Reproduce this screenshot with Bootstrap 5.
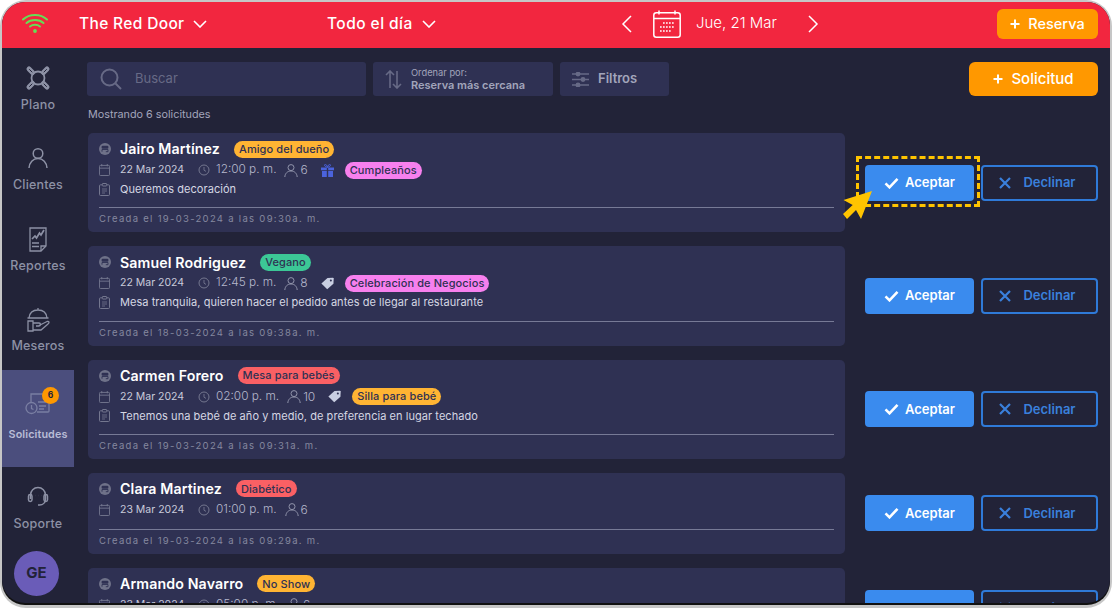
<!DOCTYPE html>
<html lang="es">
<head>
<meta charset="UTF-8">
<meta name="viewport" content="width=device-width, initial-scale=1.0">
<title>Solicitudes - The Red Door</title>
<link href="https://cdn.jsdelivr.net/npm/bootstrap@5.3.3/dist/css/bootstrap.min.css" rel="stylesheet">
<style>
html, body { height: 100%; }
body { background: #fff; font-family: Inter, "Open Sans", sans-serif; overflow: hidden; }
.outer-frame { width: 1112px; height: 608px; background: #c6c6c6; padding: 2px; border-radius: 26px; }
.app-frame { height: 601px; background: #222338; border-radius: 23px; overflow: hidden; box-shadow: 0 2px 0 #111; }
.top-bar { height: 46px; background: #f2263f; color: #fff; padding: 0 12px 3px 0; }
.venue { margin-left: 77px; width: 248px; font-size: 15.5px; font-weight: 500; letter-spacing: .35px; gap: 9px; }
.shift { width: 294px; font-size: 15.5px; font-weight: 500; letter-spacing: .45px; gap: 9px; }
.date-nav { font-size: 15px; font-weight: 300; width: 370px; }
.date-label { width: 82px; margin: 0 30px 0 15px; white-space: nowrap; }
.cal-big { margin: 0 0 0 21px; }
.btn-reserva, .btn-solicitud { background: #ff9800; color: #fff; border: 0; font-weight: 500; display: flex; align-items: center; justify-content: center; gap: 8px; }
.btn-reserva:hover, .btn-solicitud:hover { background: #ff9800; color: #fff; }
.btn-reserva { width: 101px; height: 30px; border-radius: 6px; font-size: 14.5px; }
.btn-solicitud { width: 129px; height: 34px; border-radius: 6px; font-size: 15px; }
.side-rail { width: 72px; flex: none; }
.rail-item { height: 80.5px; padding-top: 15.5px; color: #8d91a5; font-size: 12.5px; letter-spacing: .2px; font-weight: 500; }
.rail-item svg { height: 28px; }
.rail-item span { margin-top: 5px; line-height: 16px; }
.rail-active { height: 97px; background: #4b4e7d; color: #b9bcd6; padding-top: 19px; font-size: 10.8px; letter-spacing: .1px; font-weight: 600; }
.rail-active span { margin-top: 10px; }
.req-count { top: 17px; left: 40px; width: 17px; height: 17px; background: #ff9800; color: #222338; font-size: 8.5px; font-weight: 700; }
.avatar-ge { width: 45px; height: 45px; background: #6a5cb8; color: #222338; font-size: 15px; font-weight: 700; margin: 3px 0 0 12px; }
.main-pane { padding: 14px 12px 0 13px; }
.tool-box { height: 34px; background: #2f3153; border-radius: 3px; color: #a2a5bb; }
.tool-search { width: 279px; padding-left: 13px; font-size: 13px; color: #676a86; gap: 13px; }
.tool-order { width: 180px; padding-left: 12px; gap: 9px; }
.tool-filter { width: 109px; padding-left: 12px; gap: 9px; font-size: 13px; font-weight: 600; }
.tool-gap { gap: 7px; }
.order-small { font-size: 9.3px; line-height: 11px; }
.order-big { font-size: 11px; line-height: 14px; font-weight: 600; white-space: nowrap; }
.count-line { font-size: 10.8px; line-height: 16px; color: #a2a5bb; margin: 11px 0 10px 1px; }
.req-row { margin: 0 0 14px 1px; gap: 20px; }
.req-card { background: #2f3153; border-radius: 5px; padding: 7px 11px 0 11px; }
.line-name, .line-meta, .line-note { display: flex; align-items: center; }
.line-name { height: 18px; gap: 9px; }
.guest { font-size: 14.2px; font-weight: 600; letter-spacing: .12px; color: #fff; margin-right: 5px; white-space: nowrap; }
.line-meta { height: 20px; margin-top: 2px; font-size: 10.5px; color: #c9cbdb; gap: 10px; }
.line-note { height: 18.33px; font-size: 11px; letter-spacing: .05px; color: #d5d7e3; gap: 10px; }
.meta-time { font-size: 11.8px; color: #b6b8cc; font-weight: 300; margin-left: -4px; margin-right: -2px; white-space: nowrap; }
.date-txt { width: 63px; white-space: nowrap; margin-right: 5px; }
.meta-num { font-size: 12px; color: #b6b8cc; font-weight: 300; margin-left: -8px; margin-right: 3px; }
.req-pill { border-radius: 9px; height: 17px; padding: 0 5px; font-size: 11px; letter-spacing: .1px; font-weight: 500; color: #2f3153; display: inline-flex; align-items: center; white-space: nowrap; }
.line-meta .req-pill { margin-left: 1px; }
.pill-amber { background: #ffb433; }
.pill-pink { background: #f780ee; }
.pill-green { background: #3cc796; }
.pill-red { background: #fa6064; }
.req-rule { border-top: 1px solid #777a96; margin-top: 9px; }
.req-stamp { font-size: 9.5px; letter-spacing: 1.3px; color: #85889f; line-height: 20px; padding: 1px 0 3px; white-space: nowrap; }
.req-actions { width: 233px; gap: 7px; }
.btn-aceptar, .btn-declinar { height: 36px; border-radius: 4px; font-size: 13px; font-weight: 600; display: flex; align-items: center; justify-content: center; }
.btn-aceptar { width: 109px; background: #3a8bee; border: 0; color: #fff; gap: 6px; }
.btn-declinar { width: 117px; background: transparent; border: 2px solid #2f7ad8; color: #3a80dc; gap: 12px; padding: 0 4px 0 0; }
.btn-aceptar:hover { background: #3a8bee; color: #fff; }
.btn-declinar:hover { background: transparent; color: #3a80dc; border-color: #2f7ad8; }
.focus-dash { top: -9px; left: -9px; right: -6px; bottom: -6px; border: 3px dashed #ffc400; pointer-events: none; }
.focus-arrow { left: -22px; top: 26px; }
</style>
</head>
<body>
<svg width="0" height="0" class="position-absolute">
  <defs>
    <symbol id="i-round" viewBox="0 0 12 12"><circle cx="6" cy="6" r="6" fill="#6f7289"/><rect x="2.600" y="2.800" width="6.800" height="3" rx="1" fill="#2f3153"/><path d="M3 6.500h6v2.200H6.800M3 6.500v2.200" stroke="#2f3153" stroke-width=".9" fill="none"/></symbol>
    <symbol id="i-cal" viewBox="0 0 12 13"><rect x=".5" y="1.500" width="11" height="11" rx="1" fill="none" stroke="#74778f"/><path d="M.5 4.500h11M3 0v2.500M9 0v2.500" stroke="#74778f" fill="none"/></symbol>
    <symbol id="i-clock" viewBox="0 0 12 12"><circle cx="6" cy="6" r="5" fill="none" stroke="#74778f"/><path d="M6 3v3.200l2 1.200" fill="none" stroke="#74778f" stroke-width=".9"/></symbol>
    <symbol id="i-user" viewBox="0 0 14 13"><circle cx="7" cy="3.600" r="3" fill="none" stroke="#9194ab"/><path d="M.8 13c.3-3.600 2.600-6 6.200-6s5.900 2.400 6.200 6" fill="none" stroke="#9194ab"/></symbol>
    <symbol id="i-note" viewBox="0 0 11 13"><rect x=".5" y="1.800" width="10" height="10.700" rx="1" fill="none" stroke="#74778f"/><rect x="3.300" y=".5" width="4.400" height="2.500" rx=".6" fill="#2f3153" stroke="#74778f"/><path d="M3 6h5M3 8h5M3 10h3" stroke="#74778f" stroke-width=".8"/></symbol>
    <symbol id="i-gift" viewBox="0 0 13 13"><path d="M0 3.500h5.800v2.800H0zM7.200 3.500H13v2.800H7.200zM1 7h4.800v6H1zM7.200 7H12v6H7.200z" fill="#4b63dc"/><path d="M6.500 3.300C5 3 3.200 2.300 3.600.8 4.500-.3 6 1 6.500 3.300 7 1 8.500-.3 9.400.8c.4 1.500-1.400 2.200-2.900 2.500z" fill="none" stroke="#4b63dc"/></symbol>
    <symbol id="i-tag" viewBox="0 0 14 13"><path d="M7 .6 12.800.3c.5 0 .9.400.9.900l-.3 5.500-6.700 6-6.300-6.100z" fill="#c9cfe2"/><circle cx="10.600" cy="3.300" r="1.100" fill="#2f3153"/></symbol>
    <symbol id="i-check" viewBox="0 0 15 12"><path d="M1.500 6.300 5.500 10.300 13.500 1.800" fill="none" stroke="#fff" stroke-width="2.600"/></symbol>
    <symbol id="i-x" viewBox="0 0 12 12"><path d="M1 1 11 11M11 1 1 11" fill="none" stroke="#3a80dc" stroke-width="2.200"/></symbol>
    <symbol id="i-chev" viewBox="0 0 14 8"><path d="M1 1 7 7 13 1" fill="none" stroke="#fff" stroke-width="1.600"/></symbol>
    <symbol id="i-plus" viewBox="0 0 10 10"><path d="M5 .5v9M.5 5h9" fill="none" stroke="#fff" stroke-width="2"/></symbol>
  </defs>
</svg>

<div class="outer-frame">
<div class="app-frame d-flex flex-column position-relative">
  <header class="top-bar d-flex align-items-center flex-shrink-0">
    <svg class="position-absolute" style="left:20px;top:11px" width="26" height="20" viewBox="0 0 26 20" fill="none" stroke="#66dd55" stroke-width="2" stroke-linecap="round"><path d="M1 6.500C7.500.5 18.500.5 25 6.500"/><path d="M4.500 10c4.500-4 12.500-4 17 0"/><path d="M8 13.500c2.800-2.300 7.200-2.300 10 0"/><circle cx="13" cy="18" r=".9" fill="#66dd55"/></svg>
    <div class="venue d-flex align-items-center"><span>The Red Door</span><svg width="14" height="8"><use href="#i-chev"/></svg></div>
    <div class="shift d-flex align-items-center"><span>Todo el día</span><svg width="14" height="8"><use href="#i-chev"/></svg></div>
    <div class="date-nav d-flex align-items-center">
      <svg width="11" height="18" viewBox="0 0 11 18" fill="none" stroke="#fff" stroke-width="1.500"><path d="M10 1 2 9l8 8"/></svg>
      <svg class="cal-big" width="28" height="28" viewBox="0 0 28 28" fill="none" stroke="#fff" stroke-width="1.500"><rect x=".8" y="2.800" width="26.400" height="24.400" rx="2.500"/><path d="M1 8.500h26M6 .5v4M22 .5v4"/><path d="M10 13h12M7 17h15M7 21h11" stroke-width="1.700" stroke-dasharray="1.700 1.300"/></svg>
      <span class="date-label">Jue, 21 Mar</span>
      <svg width="11" height="18" viewBox="0 0 11 18" fill="none" stroke="#fff" stroke-width="1.500"><path d="m1 1 8 8-8 8"/></svg>
    </div>
    <button class="btn btn-reserva p-0 ms-auto"><svg width="10" height="10"><use href="#i-plus"/></svg>Reserva</button>
  </header>

  <div class="d-flex flex-grow-1 overflow-hidden">
    <nav class="side-rail d-flex flex-column">
      <div class="rail-item d-flex flex-column align-items-center">
        <svg width="28" viewBox="0 0 28 28" fill="none" stroke="#8d91a5" stroke-width="1.800"><circle cx="14" cy="14" r="6.500"/><path d="m5 5 3.500 3.500M23 5l-3.500 3.500M5 23l3.500-3.500M23 23l-3.500-3.500" stroke-width="5" stroke-linecap="round"/><path d="m5.500 5.500 2.500 2.500M22.500 5.500 20 8M5.500 22.500 8 20M22.500 22.500 20 20" stroke="#222338" stroke-width="1" stroke-linecap="round"/></svg>
        <span>Plano</span>
      </div>
      <div class="rail-item d-flex flex-column align-items-center">
        <svg width="28" viewBox="0 0 28 28" fill="none" stroke="#8d91a5" stroke-width="1.500"><circle cx="14" cy="9.500" r="4.800"/><path d="M5 24c.3-5.500 4-9.500 9-9.500s8.700 4 9 9.500"/></svg>
        <span>Clientes</span>
      </div>
      <div class="rail-item d-flex flex-column align-items-center">
        <svg width="28" viewBox="0 0 28 28" fill="none" stroke="#8d91a5" stroke-width="1.300"><path d="M6 3h16v18l-5 5H6z"/><path d="M17 26v-5h5"/><path d="m8 14 3-3 1.500 2 3-5 1.500 2 3-5" stroke-width="1.700"/><path d="M8 18h7M8 21.500h7" stroke-width="1.700"/></svg>
        <span>Reportes</span>
      </div>
      <div class="rail-item d-flex flex-column align-items-center">
        <svg width="28" viewBox="0 0 28 28" fill="none" stroke="#8d91a5" stroke-width="1.300"><path d="M5 13c.5-5 4-8 9-8s8.500 3 9 8zM3.500 13h21M14 3v2"/><path d="M4 16h5v10H4zM9 18h6c2 0 2 3 0 3h-3M15 20.500l8-4c2.500-.5 2.500 1.500 1 2.500l-7 6H9"/></svg>
        <span>Meseros</span>
      </div>
      <div class="rail-item rail-active d-flex flex-column align-items-center position-relative">
        <svg width="28" viewBox="0 0 28 28" fill="none" stroke="#7a7fa3" stroke-width="1.300"><path d="M7 13V5h17c.5 0 1 .5 1 1v16c0 .5-.5 1-1 1H13"/><circle cx="7.500" cy="19" r="5.500"/><path d="M7.500 16v3.500l2 1M14 13h8M15 17h7M15 20h5"/></svg>
        <span>Solicitudes</span>
        <div class="req-count position-absolute rounded-circle d-flex align-items-center justify-content-center">6</div>
      </div>
      <div class="rail-item d-flex flex-column align-items-center">
        <svg width="28" viewBox="0 0 28 28" fill="none" stroke="#8d91a5" stroke-width="1.500"><path d="M6.500 16v-4c0-4.200 3.300-7.500 7.500-7.500s7.500 3.300 7.500 7.500v4c0 3.500-2.500 6-6 6H14"/><rect x="4.500" y="11.500" width="3.500" height="7" rx="1.700"/><rect x="20" y="11.500" width="3.500" height="7" rx="1.700"/><path d="M11 12.500h.1M14 12.500h.1M17 12.500h.1"/></svg>
        <span>Soporte</span>
      </div>
      <div class="avatar-ge rounded-circle d-flex align-items-center justify-content-center">GE</div>
    </nav>

    <main class="main-pane flex-grow-1 overflow-hidden">
      <div class="d-flex tool-gap">
        <div class="tool-box tool-search d-flex align-items-center">
          <svg width="22" height="22" viewBox="0 0 22 22" fill="none" stroke="#676a86" stroke-width="2"><circle cx="9.500" cy="9.500" r="8"/><path d="m15.500 15.500 5.500 5.500"/></svg>
          <span>Buscar</span>
        </div>
        <div class="tool-box tool-order d-flex align-items-center">
          <svg width="17" height="19" viewBox="0 0 17 19" fill="none" stroke="#676a86" stroke-width="1.600"><path d="M5 18V1M1 5l4-4 4 4M12 1v17M8 14l4 4 4-4"/></svg>
          <div><div class="order-small">Ordenar por:</div><div class="order-big">Reserva más cercana</div></div>
        </div>
        <div class="tool-box tool-filter d-flex align-items-center">
          <svg width="17" height="15" viewBox="0 0 17 15" fill="none" stroke="#676a86" stroke-width="1.500"><path d="M0 2h17M0 7.500h17M0 13h17"/><circle cx="6" cy="2" r="1.700" fill="#676a86"/><circle cx="11" cy="7.500" r="1.700" fill="#676a86"/><circle cx="6" cy="13" r="1.700" fill="#676a86"/></svg>
          <span>Filtros</span>
        </div>
        <button class="btn btn-solicitud p-0 ms-auto"><svg width="10" height="10"><use href="#i-plus"/></svg>Solicitud</button>
      </div>
      <div class="count-line">Mostrando 6 solicitudes</div>

      <div class="req-row d-flex align-items-center">
        <div class="req-card flex-grow-1">
          <div class="line-name"><svg width="12" height="12"><use href="#i-round"/></svg><span class="guest">Jairo Martínez</span><span class="req-pill pill-amber">Amigo del dueño</span></div>
          <div class="line-meta"><svg width="11" height="12"><use href="#i-cal"/></svg><span class="date-txt">22 Mar 2024</span><svg width="12" height="12"><use href="#i-clock"/></svg><span class="meta-time">12:00 p. m.</span><svg width="14" height="13"><use href="#i-user"/></svg><span class="meta-num">6</span><svg width="13" height="13"><use href="#i-gift"/></svg><span class="req-pill pill-pink">Cumpleaños</span></div>
          <div class="line-note"><svg width="11" height="13"><use href="#i-note"/></svg><span>Queremos decoración</span></div>
          <div class="req-rule"></div>
          <div class="req-stamp">Creada el 19-03-2024 a las 09:30a. m.</div>
        </div>
        <div class="req-actions d-flex">
          <div class="position-relative">
            <button class="btn btn-aceptar p-0"><svg width="15" height="12"><use href="#i-check"/></svg>Aceptar</button>
            <div class="focus-dash position-absolute"></div>
            <svg class="focus-arrow position-absolute" width="30" height="29" viewBox="0 0 30 29"><polygon points="29,0 .5,9 9.700,14 0,23 4,28 13,19 18,28" fill="#ffc400"/></svg>
          </div>
          <button class="btn btn-declinar"><svg width="12" height="12"><use href="#i-x"/></svg>Declinar</button>
        </div>
      </div>

      <div class="req-row d-flex align-items-center">
        <div class="req-card flex-grow-1">
          <div class="line-name"><svg width="12" height="12"><use href="#i-round"/></svg><span class="guest">Samuel Rodriguez</span><span class="req-pill pill-green">Vegano</span></div>
          <div class="line-meta"><svg width="11" height="12"><use href="#i-cal"/></svg><span class="date-txt">22 Mar 2024</span><svg width="12" height="12"><use href="#i-clock"/></svg><span class="meta-time">12:45 p. m.</span><svg width="14" height="13"><use href="#i-user"/></svg><span class="meta-num">8</span><svg width="13" height="13"><use href="#i-tag"/></svg><span class="req-pill pill-pink">Celebración de Negocios</span></div>
          <div class="line-note"><svg width="11" height="13"><use href="#i-note"/></svg><span>Mesa tranquila, quieren hacer el pedido antes de llegar al restaurante</span></div>
          <div class="req-rule"></div>
          <div class="req-stamp">Creada el 18-03-2024 a las 09:38a. m.</div>
        </div>
        <div class="req-actions d-flex">
          <button class="btn btn-aceptar p-0"><svg width="15" height="12"><use href="#i-check"/></svg>Aceptar</button>
          <button class="btn btn-declinar"><svg width="12" height="12"><use href="#i-x"/></svg>Declinar</button>
        </div>
      </div>

      <div class="req-row d-flex align-items-center">
        <div class="req-card flex-grow-1">
          <div class="line-name"><svg width="12" height="12"><use href="#i-round"/></svg><span class="guest">Carmen Forero</span><span class="req-pill pill-red">Mesa para bebés</span></div>
          <div class="line-meta"><svg width="11" height="12"><use href="#i-cal"/></svg><span class="date-txt">22 Mar 2024</span><svg width="12" height="12"><use href="#i-clock"/></svg><span class="meta-time">02:00 p. m.</span><svg width="14" height="13"><use href="#i-user"/></svg><span class="meta-num">10</span><svg width="13" height="13"><use href="#i-tag"/></svg><span class="req-pill pill-amber">Silla para bebé</span></div>
          <div class="line-note"><svg width="11" height="13"><use href="#i-note"/></svg><span>Tenemos una bebé de año y medio, de preferencia en lugar techado</span></div>
          <div class="req-rule"></div>
          <div class="req-stamp">Creada el 19-03-2024 a las 09:31a. m.</div>
        </div>
        <div class="req-actions d-flex">
          <button class="btn btn-aceptar p-0"><svg width="15" height="12"><use href="#i-check"/></svg>Aceptar</button>
          <button class="btn btn-declinar"><svg width="12" height="12"><use href="#i-x"/></svg>Declinar</button>
        </div>
      </div>

      <div class="req-row d-flex align-items-center">
        <div class="req-card flex-grow-1">
          <div class="line-name"><svg width="12" height="12"><use href="#i-round"/></svg><span class="guest">Clara Martinez</span><span class="req-pill pill-red">Diabético</span></div>
          <div class="line-meta"><svg width="11" height="12"><use href="#i-cal"/></svg><span class="date-txt">23 Mar 2024</span><svg width="12" height="12"><use href="#i-clock"/></svg><span class="meta-time">01:00 p. m.</span><svg width="14" height="13"><use href="#i-user"/></svg><span class="meta-num">6</span></div>
          <div class="req-rule"></div>
          <div class="req-stamp">Creada el 19-03-2024 a las 09:29a. m.</div>
        </div>
        <div class="req-actions d-flex">
          <button class="btn btn-aceptar p-0"><svg width="15" height="12"><use href="#i-check"/></svg>Aceptar</button>
          <button class="btn btn-declinar"><svg width="12" height="12"><use href="#i-x"/></svg>Declinar</button>
        </div>
      </div>

      <div class="req-row d-flex align-items-center">
        <div class="req-card flex-grow-1">
          <div class="line-name"><svg width="12" height="12"><use href="#i-round"/></svg><span class="guest">Armando Navarro</span><span class="req-pill pill-amber">No Show</span></div>
          <div class="line-meta"><svg width="11" height="12"><use href="#i-cal"/></svg><span class="date-txt">23 Mar 2024</span><svg width="12" height="12"><use href="#i-clock"/></svg><span class="meta-time">05:00 p. m.</span><svg width="14" height="13"><use href="#i-user"/></svg><span class="meta-num">6</span></div>
          <div class="req-rule"></div>
          <div class="req-stamp">Creada el 19-03-2024 a las 09:28a. m.</div>
        </div>
        <div class="req-actions d-flex">
          <button class="btn btn-aceptar p-0"><svg width="15" height="12"><use href="#i-check"/></svg>Aceptar</button>
          <button class="btn btn-declinar"><svg width="12" height="12"><use href="#i-x"/></svg>Declinar</button>
        </div>
      </div>
    </main>
  </div>
</div>
</div>
<script src="https://cdn.jsdelivr.net/npm/bootstrap@5.3.3/dist/js/bootstrap.bundle.min.js"></script>
</body>
</html>
